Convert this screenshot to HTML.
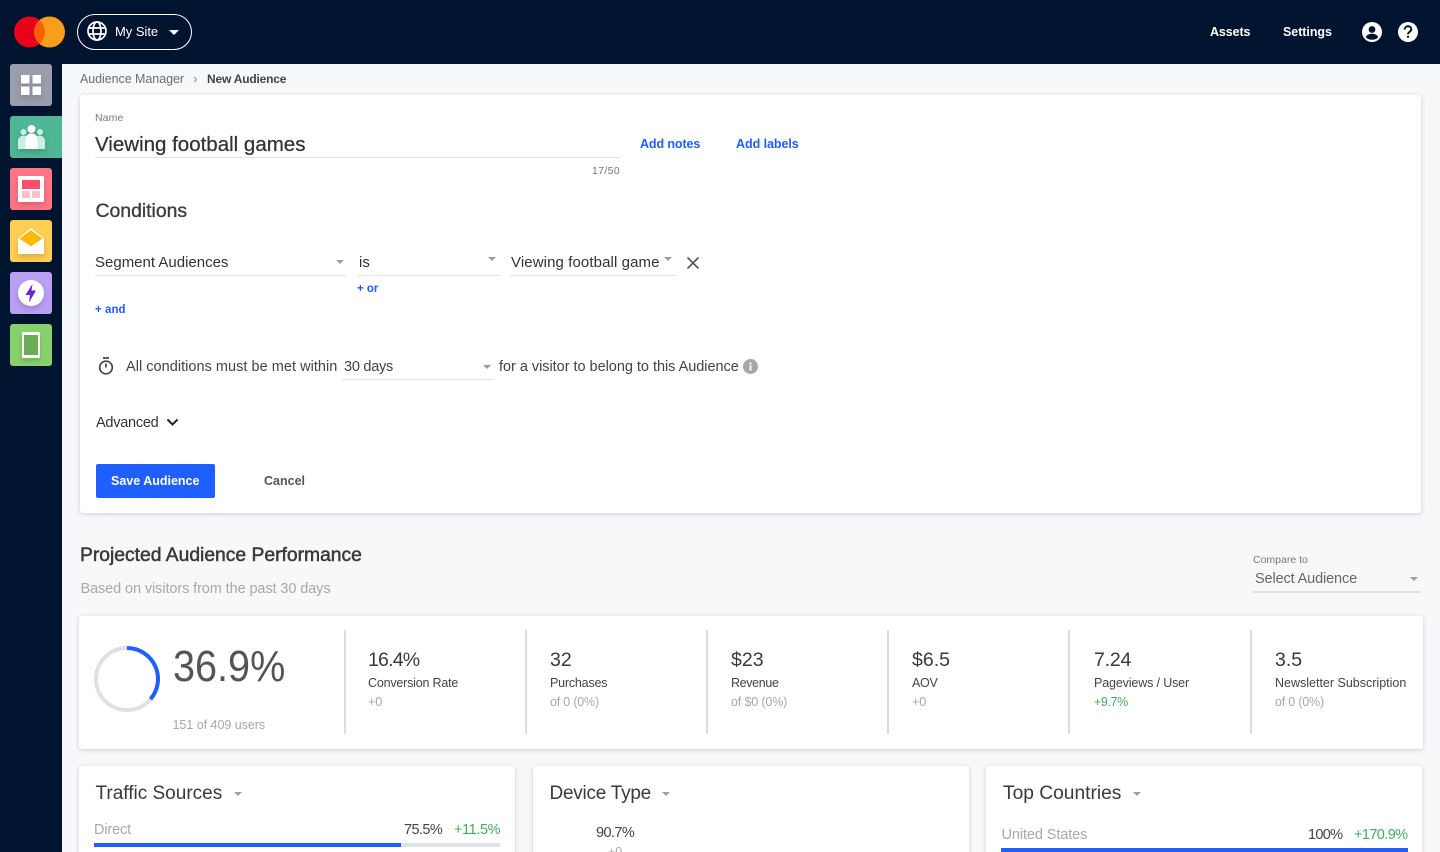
<!DOCTYPE html>
<html lang="en"><head><meta charset="utf-8"><title>New Audience</title>
<style>
html,body{margin:0;padding:0;width:1440px;height:852px;overflow:hidden;background:#f6f8fa;font-family:"Liberation Sans",Arial,sans-serif;color:#333}
#r{position:absolute;left:0;top:0;width:1440px;height:852px;overflow:hidden;background:#f6f8fa}
.a{position:absolute}
.t{position:absolute;white-space:nowrap;line-height:20px;height:20px}
.b{font-weight:bold}
.m{-webkit-text-stroke:.35px currentColor}
.blue{color:#1f5eff}
.gr{color:#a8a8a8}
.g{color:#3fae5e}
.card{position:absolute;background:#fff;border-radius:3px;box-shadow:0 1px 5px rgba(40,50,70,.2)}
.ln{position:absolute;height:1px;background:#dfe1e4}
.v{position:absolute;width:1.500px;background:#dcdcdc;top:630px;height:104px}
.c{position:absolute;width:0;height:0;border-left:4px solid transparent;border-right:4px solid transparent;border-top:4px solid #9e9e9e}
.ic{position:absolute;left:10px;width:42px;height:42px;border-radius:3px}
.s{filter:drop-shadow(0 3px 3px rgba(0,0,0,.16))}
</style></head><body><div id="r">
<div class="a" style="left:0;top:0;width:1440px;height:64px;background:#00142f"></div>
<div class="a" style="left:0;top:64px;width:62px;height:788px;background:#00142f"></div>

<!-- logo -->
<svg class="a" style="left:14px;top:16px" width="52" height="32" viewBox="0 0 52 32"><circle cx="15.500" cy="16" r="15.500" fill="#eb001b"/><circle cx="35.500" cy="16" r="15.500" fill="#f79e1b"/><path d="M25.500 4.200a15.500 15.500 0 0 1 0 23.600a15.500 15.500 0 0 1 0-23.600z" fill="#ff5f00"/></svg>

<!-- site -->
<div class="a" style="left:77px;top:14px;width:113px;height:34px;border:1px solid #fff;border-radius:18px"></div>
<svg class="a" style="left:87px;top:21px" width="20" height="20" viewBox="0 0 20 20" fill="none" stroke="#fff" stroke-width="1.700"><circle cx="10" cy="10" r="9"/><ellipse cx="10" cy="10" rx="4" ry="9"/><path d="M1.500 7h17M1.500 13h17"/></svg>
<div class="t" style="left:115px;top:22px;font-size:13px;color:#fff;letter-spacing:-.03px">My Site</div>
<div class="c" style="left:169px;top:30px;border-left-width:5px;border-right-width:5px;border-top:5px solid #fff"></div>

<!-- top right -->
<div class="t b" style="left:1210px;top:22px;font-size:12.500px;color:#fff;letter-spacing:-.1px">Assets</div>
<div class="t b" style="left:1283px;top:22px;font-size:12.500px;color:#fff;letter-spacing:-.05px">Settings</div>
<svg class="a" style="left:1362px;top:22px" width="20" height="20" viewBox="0 0 20 20"><circle cx="10" cy="10" r="10" fill="#fff"/><circle cx="10" cy="7.500" r="3.400" fill="#00142f"/><path d="M3.800 15.200C5 12.600 7.500 11.800 10 11.800s5 .8 6.200 3.400C14.800 16.900 12.500 17.800 10 17.800s-4.800-.9-6.200-2.600z" fill="#00142f"/></svg>
<svg class="a" style="left:1398px;top:22px" width="20" height="20" viewBox="0 0 20 20"><circle cx="10" cy="10" r="10" fill="#fff"/><path d="M6.700 7.500C6.700 5.600 8.200 4.300 10 4.300s3.300 1.200 3.300 3c0 2.500-3.300 2.600-3.300 5" fill="none" stroke="#00142f" stroke-width="2"/><rect x="9" y="13.800" width="2" height="2" fill="#00142f"/></svg>

<!-- sidebar icons -->
<div class="ic" style="top:64px;background:#9c9dab"></div>
<svg class="a s" style="left:21px;top:75px;overflow:visible" width="20" height="20"><g fill="#fff"><rect width="8.500" height="8.500"/><rect x="11.500" width="8.500" height="8.500"/><rect y="11.500" width="8.500" height="8.500"/><rect x="11.500" y="11.500" width="8.500" height="8.500"/></g></svg>

<div class="ic" style="top:116px;width:52px;background:#4fb796;border-radius:3px 0 0 3px"></div>
<svg class="a s" style="left:18px;top:124px;overflow:visible" width="28" height="26" viewBox="0 0 28 26"><g fill="#c6f0e2"><circle cx="5.500" cy="8" r="3"/><circle cx="22" cy="8" r="3"/><path d="M0 25v-8c0-3 2.500-5.500 6-5.500l2 1V25zM27 25v-8c0-3-2.500-5.500-6-5.500l-2 1V25z"/></g><g fill="#fff"><circle cx="13.500" cy="5" r="4"/><path d="M7.500 25V15c0-3.500 2.500-5.500 6-5.500s6 2 6 5.500v10z"/></g></svg>

<div class="ic" style="top:168px;background:#ff7487"></div>
<svg class="a s" style="left:18px;top:176px;overflow:visible" width="26" height="26"><rect width="26" height="26" rx="1" fill="#fff"/><rect x="4" y="4" width="18" height="9" fill="#ff4d6a"/><rect x="4" y="15" width="8" height="7" fill="#ffc2cc"/><rect x="14" y="15" width="8" height="7" fill="#ffc2cc"/></svg>

<div class="ic" style="top:220px;background:#ffce52"></div>
<svg class="a s" style="left:18px;top:228px;overflow:visible" width="26" height="26" viewBox="0 0 26 26"><path d="M0 10.500L13 0l13 10.500V25a1 1 0 0 1-1 1H1a1 1 0 0 1-1-1z" fill="#fff"/><path d="M1.500 10.500L13 2l11.500 8.500L13 18.500z" fill="#ffb900"/></svg>

<div class="ic" style="top:272px;background:#b8a0f5"></div>
<svg class="a s" style="left:18px;top:280px;overflow:visible" width="26" height="26" viewBox="0 0 26 26"><circle cx="13" cy="13" r="13" fill="#fff"/><path d="M14.500 4L7.500 15h4.500L11 22.500 18 10.500h-4.500z" fill="#6c22c9"/></svg>

<div class="ic" style="top:324px;background:#88d06c"></div>
<div class="a" style="left:22px;top:332px;width:18px;height:26px;background:#fff;border-radius:1px;box-shadow:0 3px 4px rgba(0,0,0,.16)"></div>
<div class="a" style="left:24px;top:335px;width:14px;height:20px;background:#6aad57"></div>

<!-- breadcrumb -->
<div class="t" style="left:80px;top:69px;font-size:12.500px;color:#6d6d6d;letter-spacing:-.06px">Audience Manager</div>
<div class="t" style="left:193.500px;top:69px;font-size:12px;color:#777">›</div>
<div class="t b" style="left:207px;top:69px;font-size:12px;color:#444;letter-spacing:-.2px">New Audience</div>

<!-- form card -->
<div class="card" style="left:80px;top:95px;width:1341px;height:418px"></div>
<div class="t" style="left:95px;top:108px;font-size:10.500px;color:#777;letter-spacing:.1px">Name</div>
<div class="t m" style="left:95px;top:135px;font-size:20.500px;color:#333;-webkit-text-stroke-width:.25px">Viewing football games</div>
<div class="ln" style="left:95px;top:157px;width:525px"></div>
<div class="t" style="left:592px;top:161px;font-size:10.500px;color:#777;letter-spacing:.35px">17/50</div>
<div class="t b blue" style="left:640px;top:134px;font-size:12.500px;letter-spacing:-.1px">Add notes</div>
<div class="t b blue" style="left:736px;top:134px;font-size:12.500px;letter-spacing:-.05px">Add labels</div>
<div class="t m" style="left:95.500px;top:201px;font-size:19.400px;color:#3d3d3d">Conditions</div>

<div class="t" style="left:95px;top:253px;font-size:15px">Segment Audiences</div>
<div class="c" style="left:336px;top:260px"></div>
<div class="ln" style="left:95px;top:275px;width:252px"></div>
<div class="t" style="left:359px;top:253px;font-size:15px">is</div>
<div class="c" style="left:488px;top:257px"></div>
<div class="ln" style="left:357px;top:275px;width:143px"></div>
<div class="t" style="left:511px;top:253px;font-size:15px;letter-spacing:.1px">Viewing football game</div>
<div class="c" style="left:664px;top:257px"></div>
<div class="ln" style="left:510px;top:275px;width:166px"></div>
<svg class="a" style="left:686px;top:256px" width="14" height="14"><path d="M1.500 1.500l11 11M12.500 1.500l-11 11" stroke="#555" stroke-width="1.600" fill="none"/></svg>
<div class="t b blue" style="left:357px;top:279px;font-size:11.500px">+ or</div>
<div class="t b blue" style="left:95px;top:300px;font-size:11.500px;letter-spacing:.05px">+ and</div>

<svg class="a" style="left:98px;top:357px" width="16" height="18" viewBox="0 0 16 18" fill="none" stroke="#444" stroke-width="1.700"><circle cx="8" cy="10.500" r="6.300"/><path d="M5 1h6M8 6.500v4"/></svg>
<div class="t" style="left:126px;top:357px;font-size:14.500px;color:#444;letter-spacing:.03px">All conditions must be met within</div>
<div class="t" style="left:344px;top:357px;font-size:14.500px;color:#444;letter-spacing:-.25px">30 days</div>
<div class="c" style="left:483px;top:365px"></div>
<div class="ln" style="left:342px;top:379px;width:152px"></div>
<div class="t" style="left:499px;top:357px;font-size:14.500px;color:#444;letter-spacing:-.03px">for a visitor to belong to this Audience</div>
<svg class="a" style="left:743px;top:359px" width="15" height="15"><circle cx="7.500" cy="7.500" r="7.500" fill="#a6a6a6"/><rect x="6.500" y="6.500" width="2" height="5" fill="#fff"/><rect x="6.500" y="3.500" width="2" height="2" fill="#fff"/></svg>

<div class="t" style="left:96px;top:413px;font-size:14.500px;color:#333;letter-spacing:-.25px">Advanced</div>
<svg class="a" style="left:166px;top:418px" width="13" height="9"><path d="M1.500 1.500L6.500 6.500L11.500 1.500" stroke="#222" stroke-width="2" fill="none"/></svg>

<div class="a" style="left:95.500px;top:463.500px;width:119px;height:34.500px;background:#1f5eff;border-radius:2px"></div>
<div class="t b" style="left:111px;top:471px;font-size:12.500px;color:#fff">Save Audience</div>
<div class="t b" style="left:264px;top:471px;font-size:12.500px;color:#555">Cancel</div>

<!-- section header -->
<div class="t m" style="left:80px;top:546px;font-size:19.300px;color:#3a3a3a;-webkit-text-stroke-width:.5px">Projected Audience Performance</div>
<div class="t gr" style="left:80.500px;top:579px;font-size:14.500px;letter-spacing:-.1px">Based on visitors from the past 30 days</div>
<div class="t" style="left:1253px;top:550px;font-size:10.500px;color:#777">Compare to</div>
<div class="t" style="left:1255px;top:569px;font-size:14.500px;color:#666;letter-spacing:-.13px">Select Audience</div>
<div class="c" style="left:1410px;top:577px"></div>
<div class="ln" style="left:1253px;top:591px;width:168px;height:1.500px"></div>

<!-- stats card -->
<div class="card" style="left:79px;top:616px;width:1344px;height:133px"></div>
<svg class="a" style="left:93px;top:645px" width="68" height="68" viewBox="0 0 68 68" fill="none"><circle cx="34" cy="34" r="31" stroke="#dfe1e4" stroke-width="4"/><path d="M34 3A31 31 0 0 1 57.500 54.200" stroke="#1f5eff" stroke-width="4"/></svg>
<div class="t" style="left:173px;top:643px;font-size:44px;line-height:48px;height:48px;color:#555;transform:scaleX(.9);transform-origin:0 50%">36.9%</div>
<div class="t gr" style="left:172.500px;top:715px;font-size:12.500px;letter-spacing:-.03px">151 of 409 users</div>

<div class="v" style="left:344px"></div>
<div class="v" style="left:525px"></div>
<div class="v" style="left:706px"></div>
<div class="v" style="left:887px"></div>
<div class="v" style="left:1068px"></div>
<div class="v" style="left:1250px"></div>

<div class="t" style="left:368px;top:650px;font-size:19.500px;color:#3a3a3a;letter-spacing:-.8px">16.4%</div>
<div class="t" style="left:368px;top:673px;font-size:12.500px;color:#444;letter-spacing:-.2px">Conversion Rate</div>
<div class="t gr" style="left:368px;top:692px;font-size:12.500px">+0</div>

<div class="t" style="left:550px;top:650px;font-size:19.500px;color:#3a3a3a">32</div>
<div class="t" style="left:550px;top:673px;font-size:12.500px;color:#444;letter-spacing:-.2px">Purchases</div>
<div class="t gr" style="left:550px;top:692px;font-size:12.500px;letter-spacing:-.2px">of 0 (0%)</div>

<div class="t" style="left:731px;top:650px;font-size:19.500px;color:#3a3a3a">$23</div>
<div class="t" style="left:731px;top:673px;font-size:12.500px;color:#444;letter-spacing:-.35px">Revenue</div>
<div class="t gr" style="left:731px;top:692px;font-size:12.500px;letter-spacing:-.15px">of $0 (0%)</div>

<div class="t" style="left:912px;top:650px;font-size:19.500px;color:#3a3a3a">$6.5</div>
<div class="t" style="left:912px;top:673px;font-size:12.500px;color:#444;letter-spacing:-.3px">AOV</div>
<div class="t gr" style="left:912px;top:692px;font-size:12.500px">+0</div>

<div class="t" style="left:1094px;top:650px;font-size:19.500px;color:#3a3a3a;letter-spacing:-.2px">7.24</div>
<div class="t" style="left:1094px;top:673px;font-size:12.500px;color:#444;letter-spacing:-.14px">Pageviews / User</div>
<div class="t g" style="left:1094px;top:692px;font-size:12.500px;letter-spacing:-.4px">+9.7%</div>

<div class="t" style="left:1275px;top:650px;font-size:19.500px;color:#3a3a3a">3.5</div>
<div class="t" style="left:1275px;top:673px;font-size:12.500px;color:#444">Newsletter Subscription</div>
<div class="t gr" style="left:1275px;top:692px;font-size:12.500px;letter-spacing:-.2px">of 0 (0%)</div>

<!-- bottom cards -->
<div class="card" style="left:79px;top:766px;width:436px;height:100px"></div>
<div class="t" style="left:95.500px;top:784px;font-size:19px;color:#3a3a3a">Traffic Sources</div>
<div class="c" style="left:234px;top:792px"></div>
<div class="t gr" style="left:94px;top:820px;font-size:14.500px;letter-spacing:-.15px">Direct</div>
<div class="t" style="left:404px;top:820px;font-size:14.500px;color:#444;letter-spacing:-.6px">75.5%</div>
<div class="t g" style="left:454px;top:820px;font-size:14.500px;letter-spacing:-.4px">+11.5%</div>
<div class="a" style="left:94px;top:843px;width:406px;height:4px;background:#dfe1e4"></div>
<div class="a" style="left:94px;top:843px;width:307px;height:4px;background:#1f5eff"></div>

<div class="card" style="left:533px;top:766px;width:436px;height:100px"></div>
<div class="t" style="left:549.500px;top:784px;font-size:19px;color:#3a3a3a;letter-spacing:-.25px">Device Type</div>
<div class="c" style="left:662px;top:792px"></div>
<div class="t" style="left:596px;top:823px;font-size:14.500px;color:#444;letter-spacing:-.6px">90.7%</div>
<div class="t gr" style="left:608px;top:842px;font-size:12.500px">+0</div>

<div class="card" style="left:986px;top:766px;width:436px;height:100px"></div>
<div class="t" style="left:1003px;top:784px;font-size:19.200px;color:#3a3a3a">Top Countries</div>
<div class="c" style="left:1133px;top:792px"></div>
<div class="t gr" style="left:1001.500px;top:825px;font-size:14.500px;letter-spacing:-.1px">United States</div>
<div class="t" style="left:1308px;top:825px;font-size:14.500px;color:#444;letter-spacing:-.7px">100%</div>
<div class="t g" style="left:1354px;top:825px;font-size:14.500px;letter-spacing:-.6px">+170.9%</div>
<div class="a" style="left:1001px;top:848px;width:407px;height:4px;background:#1f5eff"></div>
</div></body></html>
